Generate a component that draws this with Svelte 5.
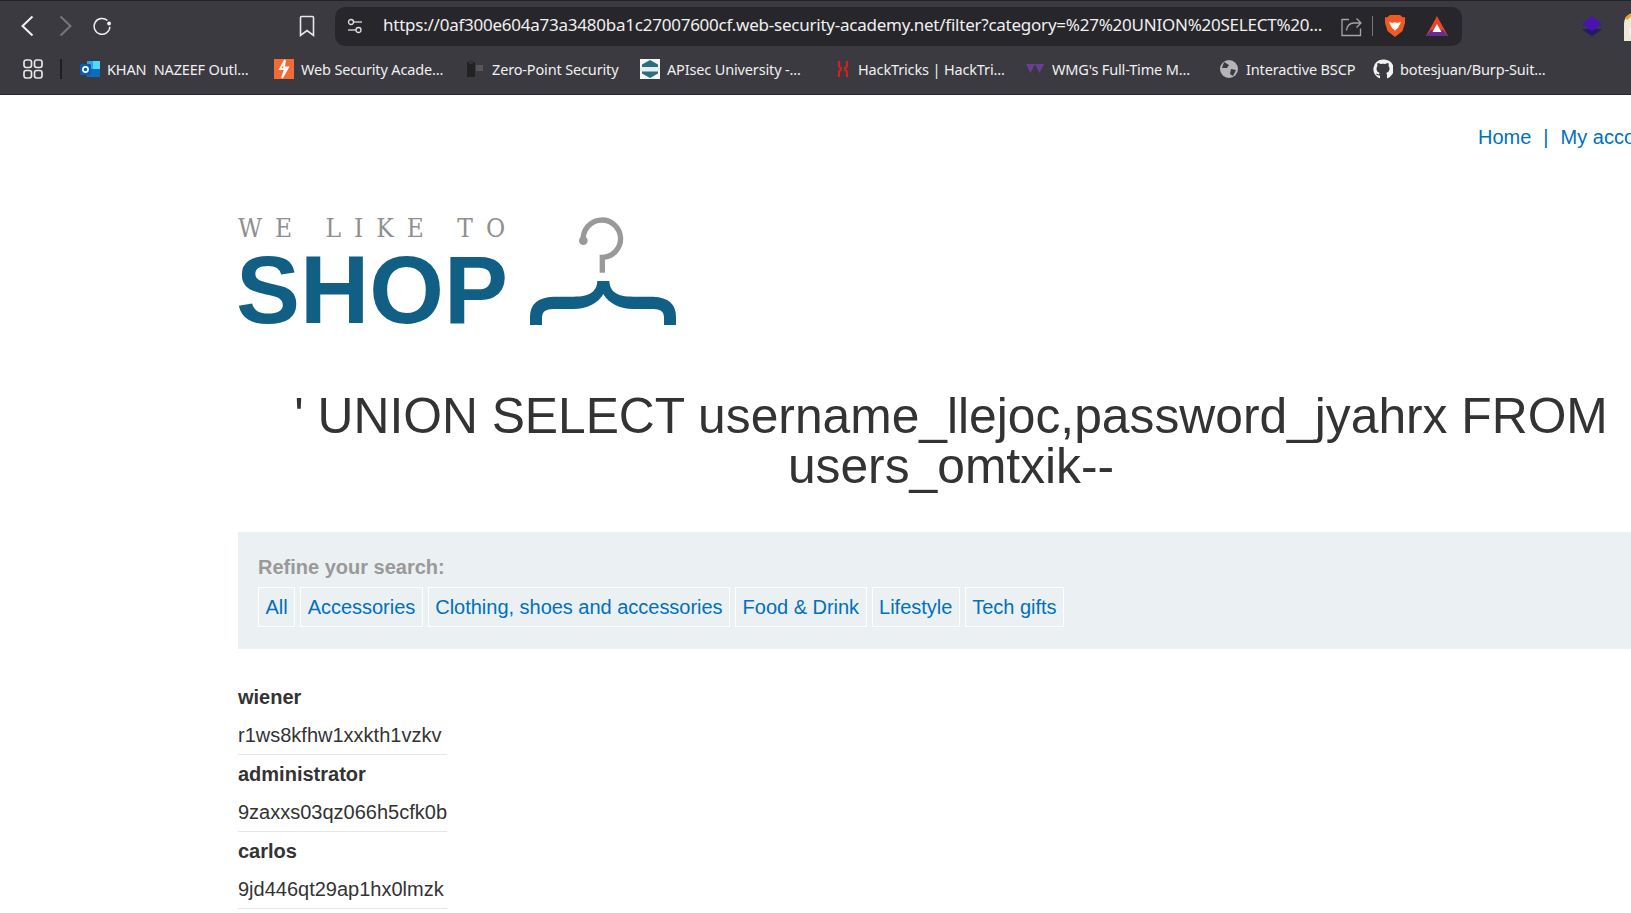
<script lang="ts">
  const bookmarks = [
    { id: "outlook", label: "KHAN  NAZEEF Outl...", w: 194 },
    { id: "wsa", label: "Web Security Acade...", w: 191 },
    { id: "zero", label: "Zero-Point Security", w: 175 },
    { id: "apisec", label: "APIsec University -...", w: 195 },
    { id: "hacktricks", label: "HackTricks | HackTri...", w: 190 },
    { id: "wmg", label: "WMG's Full-Time M...", w: 194 },
    { id: "globe", label: "Interactive BSCP", w: 154 },
    { id: "github", label: "botesjuan/Burp-Suit...", w: 172 },
  ];

  const categories = [
    "All",
    "Accessories",
    "Clothing, shoes and accessories",
    "Food & Drink",
    "Lifestyle",
    "Tech gifts",
  ];

  const users = [
    { name: "wiener", password: "r1ws8kfhw1xxkth1vzkv" },
    { name: "administrator", password: "9zaxxs03qz066h5cfk0b" },
    { name: "carlos", password: "9jd446qt29ap1hx0lmzk" },
  ];
</script>

<div class="page">
  <header class="browser">
    <div class="toolbar">
      <button class="nav-btn" aria-label="Back">
        <svg width="20" height="22" viewBox="0 0 20 22"><path d="M14.500 1.500 4.500 11 14.500 20.500" fill="none" stroke="#f2f2f2" stroke-width="2" /></svg>
      </button>
      <button class="nav-btn" aria-label="Forward">
        <svg width="20" height="22" viewBox="0 0 20 22"><path d="M5.500 1.500 15.500 11 5.500 20.500" fill="none" stroke="#77777b" stroke-width="2" /></svg>
      </button>
      <button class="nav-btn" aria-label="Reload">
        <svg width="24" height="24" viewBox="0 0 24 24"><path d="M18.500 5.500A9.500 9.500 0 1 0 21.500 13" fill="none" stroke="#f2f2f2" stroke-width="1.700" /><circle cx="20.500" cy="9" r="2.300" fill="#f2f2f2" /></svg>
      </button>
      <button class="nav-btn save" aria-label="Bookmark">
        <svg width="20" height="24" viewBox="0 0 20 24"><path d="M3.500 3.500Q3.500 2.500 4.500 2.500H15.500Q16.500 2.500 16.500 3.500V21.500L10 16.500 3.500 21.500Z" fill="none" stroke="#e8e8e8" stroke-width="1.600" /></svg>
      </button>
      <div class="urlbar">
        <svg class="tune" width="18" height="18" viewBox="0 0 18 18"><g fill="none" stroke="#e0e0e0" stroke-width="1.300"><circle cx="5" cy="5" r="2.500" /><path d="M7.500 5H16" /><circle cx="12.500" cy="13" r="2.500" /><path d="M2 13H10" /></g></svg>
        <span class="url">https://0af300e604a73a3480ba1c27007600cf.web-security-academy.net/filter?category=%27%20UNION%20SELECT%20...</span>
        <svg class="share" width="22" height="22" viewBox="0 0 22 22"><path d="M9 4.500H2V20.500H20.500V13.500M6.500 15.500Q7.500 8 14 8H20.500M16.500 3.500 21 8 16.500 12.500" fill="none" stroke="#a5a5a8" stroke-width="1.300" /></svg>
        <span class="url-sep"></span>
        <svg class="lion" width="22" height="24" viewBox="0 0 22 24"><path d="M6 1H16L19 3.500 21 3 21 9 18.500 17 11 23 3.500 17 1 9 1 3 3 3.500Z" fill="#f15a22" /><path d="M5 8 9 9 11 8 13 9 17 8 14 14 12 15.500 11 17 10 15.500 8 14Z" fill="#fff" /></svg>
        <svg class="triangle" width="24" height="22" viewBox="0 0 24 22"><path d="M12 1 23 21H1Z" fill="#e8452c" /><path d="M1 21 6 15H18L23 21Z" fill="#662d91" /><path d="M12 9 16.500 17H7.500Z" fill="#fff" /></svg>
      </div>
      <div class="extensions">
        <svg width="22" height="22" viewBox="0 0 22 22"><path d="M11 13 21 14.500 11 21 1 14.500Z" fill="#241a6b" /><path d="M11 1 21 9 11 16 1 9Z" fill="#4a12b0" /></svg>
        <svg class="avatar" width="24" height="30" viewBox="0 0 24 30"><path d="M2 12Q3 2 14 2T24 10V30H2Z" fill="#f0e8d8" /><path d="M4 8Q10 1 18 3" fill="none" stroke="#e8a030" stroke-width="3" /><rect x="8" y="13" width="16" height="15" rx="6" fill="#fff" /></svg>
      </div>
    </div>
    <nav class="bookmarks">
      <svg class="apps" width="22" height="22" viewBox="0 0 22 22"><g fill="none" stroke="#e6e6e6" stroke-width="1.700"><rect x="2" y="2" width="7.500" height="7.500" rx="2.200" /><rect x="12.500" y="2" width="7.500" height="7.500" rx="2.200" /><rect x="2" y="12.500" width="7.500" height="7.500" rx="2.200" /><rect x="12.500" y="12.500" width="7.500" height="7.500" rx="2.200" /></g></svg>
      <span class="bar-sep"></span>
      {#each bookmarks as b}
        <a class="bookmark" href="#top" style="width:{b.w}px">
          <span class="favicon">
            {#if b.id === "outlook"}
              <svg width="20" height="20" viewBox="0 0 20 20"><rect x="7" y="2" width="13" height="16" fill="#28a8ea" /><rect x="13" y="2" width="7" height="8" fill="#50d9ff" /><path d="M7 10H20V18H7Z" fill="#0f6cbd" /><rect x="0" y="5" width="11" height="11" rx="1" fill="#0a5ea8" /><circle cx="5.500" cy="10.500" r="2.600" fill="none" stroke="#fff" stroke-width="1.600" /></svg>
            {:else if b.id === "wsa"}
              <svg width="20" height="20" viewBox="0 0 20 20"><rect width="20" height="20" fill="#f26b35" /><path d="M11 1 6 10H11L8 19 14 8.500H10Z" fill="none" stroke="#fff" stroke-width="1.800" /></svg>
            {:else if b.id === "zero"}
              <svg width="20" height="20" viewBox="0 0 20 20"><rect x="2" y="3" width="8" height="15" fill="#222" /><rect x="4" y="1" width="4" height="4" fill="#333" /><rect x="11" y="6" width="7" height="6" fill="#55555a" /></svg>
            {:else if b.id === "apisec"}
              <svg width="20" height="20" viewBox="0 0 20 20"><rect width="20" height="20" fill="#f2f6f6" /><path d="M10 1 18 5.500V14.500L10 19 2 14.500V5.500Z" fill="#2a6f80" /><rect x="0" y="8" width="20" height="4.500" fill="#e8eeee" /></svg>
            {:else if b.id === "hacktricks"}
              <svg width="16" height="20" viewBox="0 0 16 20"><path d="M4 2V6Q4 9 7 9.500M12 2V6Q12 9 9 9.500M4 18V14Q4 11 7 10.500M12 18V14Q12 11 9 10.500" fill="none" stroke="#d8201c" stroke-width="2" /></svg>
            {:else if b.id === "wmg"}
              <svg width="20" height="20" viewBox="0 0 20 20"><path d="M1 5H10L5.500 14ZM10 5H19L14.500 14Z" fill="#6a3d96" /></svg>
            {:else if b.id === "globe"}
              <svg width="20" height="20" viewBox="0 0 20 20"><circle cx="10" cy="10" r="9" fill="#b5b5b8" /><path d="M5 3 10 6 8 9 3 9ZM12 10 17 11 14 17 11 15Z" fill="#3a3a40" /></svg>
            {:else}
              <svg width="20" height="20" viewBox="0 0 20 20"><path d="M10 .5A9.700 9.700 0 0 0 7 19.400V16.500Q3.500 17 2.800 14.500 4.500 15 5.800 15.600 6 14.600 6.800 14 3.500 13 3.500 9.500 3.500 8 4.500 7 4 5.500 4.700 4 6.200 4 7.600 5.100 10 4.600 12.400 5.100 13.800 4 15.300 4 16 5.500 15.500 7 16.500 8 16.500 9.500 16.500 13 13.200 14 14 15 14 16V19.400A9.700 9.700 0 0 0 10 .5Z" fill="#f2f2f2" /></svg>
            {/if}
          </span>
          <span class="bookmark-label">{b.label}</span>
        </a>
      {/each}
    </nav>
  </header>

  <main class="site">
    <div class="top-links">
      <a href="#top">Home</a><span class="pipe">|</span><a href="#top">My account</a>
    </div>

    <div class="container">
      <div class="logo">
        <div class="logo-text">
          <span class="logo-small">WE LIKE TO</span>
          <span class="logo-big">SHOP</span>
        </div>
        <svg class="hanger" width="146" height="112" viewBox="930 45 438 336">
          <path d="M930 375V350Q930 293 1000 290H1060C1110 290 1130 275 1132 243H1168C1170 275 1190 290 1240 290H1300Q1368 293 1368 350V375H1332V350Q1332 327 1300 327H1240C1200 327 1165 310 1150 282 1135 310 1100 327 1060 327H1000Q966 327 966 350V375Z" fill="#125f85" />
          <path d="M1090 122A56 56 0 1 1 1147 172V218" fill="none" stroke="#999" stroke-width="16" />
          <circle cx="1090" cy="122" r="13" fill="#999" />
        </svg>
      </div>

      <h1>' UNION SELECT username_llejoc,password_jyahrx FROM users_omtxik--</h1>

      <section class="filter">
        <p class="refine">Refine your search:</p>
        <div class="filter-links">
          {#each categories as c}
            <a href="#top">{c}</a>
          {/each}
        </div>
      </section>

      <table>
        <tbody>
          {#each users as u}
            <tr><th>{u.name}</th></tr>
            <tr><td>{u.password}</td></tr>
          {/each}
        </tbody>
      </table>
    </div>
  </main>
</div>

<style>
  :global(body) {
    margin: 0;
    background: #fff;
  }

  .page {
    width: 1631px;
    height: 913px;
    overflow: hidden;
    font-family: "Liberation Sans", Arial, sans-serif;
    color: #333;
  }

  .browser {
    height: 95px;
    box-sizing: border-box;
    background: #3a3a40;
    border-top: 1px solid #232327;
    border-bottom: 1px solid #2a2a2e;
    font-family: "Noto Sans", "Open Sans", sans-serif;
  }

  .toolbar {
    display: flex;
    align-items: center;
    height: 50px;
    padding-left: 18px;
  }

  .nav-btn {
    width: 20px;
    height: 24px;
    padding: 0;
    margin-right: 17px;
    border: 0;
    background: none;
    display: flex;
    align-items: center;
    justify-content: center;
  }

  .nav-btn.save {
    margin-left: 168px;
    margin-right: 18px;
  }

  .urlbar {
    display: flex;
    align-items: center;
    width: 1127px;
    height: 39px;
    flex: none;
    box-sizing: border-box;
    padding-left: 11px;
    background: #26262b;
    border-radius: 10px;
  }

  .url {
    margin-left: 19px;
    width: 943px;
    flex: none;
    white-space: nowrap;
    overflow: hidden;
    font-size: 17px;
    line-height: 24px;
    padding-bottom: 2px;
    letter-spacing: -0.24px;
    color: #f0f0f0;
  }

  .share {
    margin-left: 14px;
  }

  .url-sep {
    width: 1px;
    height: 20px;
    margin: 0 11px 0 10px;
    background: #77777b;
  }

  .triangle {
    margin-left: 19px;
  }

  .extensions {
    display: flex;
    align-items: center;
    gap: 19px;
    margin-left: 119px;
  }

  .avatar {
    flex: none;
  }

  .bookmarks {
    display: flex;
    align-items: center;
    height: 35px;
    padding-left: 22px;
  }

  .apps {
    flex: none;
  }

  .bar-sep {
    width: 2px;
    height: 20px;
    margin: 0 18px 0 16px;
    background: #1f1f23;
  }

  .bookmark {
    display: flex;
    align-items: center;
    gap: 7px;
    flex: none;
    color: #f0f0f0;
    text-decoration: none;
    font-size: 14.5px;
    letter-spacing: -0.15px;
    white-space: pre;
  }

  .favicon {
    display: flex;
    height: 20px;
    flex: none;
  }

  .top-links {
    padding: 30px 0 0 1478px;
    height: 24px;
    font-size: 20px;
    line-height: 24px;
    white-space: nowrap;
  }

  a {
    color: #0071bc;
    text-decoration: none;
  }

  .pipe {
    margin: 0 12px;
    color: #0071bc;
  }

  .container {
    width: 1426px;
    margin-left: 238px;
  }

  .logo {
    display: flex;
    align-items: flex-end;
    margin-top: 65px;
  }

  .logo-text {
    display: flex;
    flex-direction: column;
  }

  .logo-small {
    font-family: "DejaVu Serif Condensed", "DejaVu Serif", serif;
    font-stretch: condensed;
    font-size: 26px;
    line-height: 28px;
    letter-spacing: 13px;
    color: #8f8f8f;
    white-space: nowrap;
  }

  .logo-big {
    font-weight: 700;
    font-size: 96px;
    line-height: 90px;
    margin: 3px 0 0 -2px;
    color: #125f85;
  }

  .hanger {
    margin-left: 12px;
    margin-bottom: 8px;
  }

  h1 {
    margin: 56px 0 0;
    font-size: 49.75px;
    line-height: 50px;
    font-weight: 400;
    text-align: center;
    color: #333;
  }

  .filter {
    margin-top: 41px;
    height: 117px;
    box-sizing: border-box;
    padding: 22px 20px 20px;
    background: #ebf0f2;
  }

  .refine {
    margin: 0 0 7px;
    font-size: 20px;
    line-height: 26px;
    font-weight: 700;
    color: #999;
  }

  .filter-links {
    display: flex;
    gap: 5px;
  }

  .filter-links a {
    font-size: 20px;
    line-height: 38px;
    letter-spacing: -0.02px;
    padding: 0 6.5px;
    border: 1px solid #fff;
  }

  table {
    margin-top: 29px;
    border-collapse: collapse;
    font-size: 20px;
  }

  th,
  td {
    padding: 0;
    text-align: left;
    line-height: 38px;
    color: #333;
  }

  td {
    border-bottom: 1px solid #e6e6e6;
  }
</style>
